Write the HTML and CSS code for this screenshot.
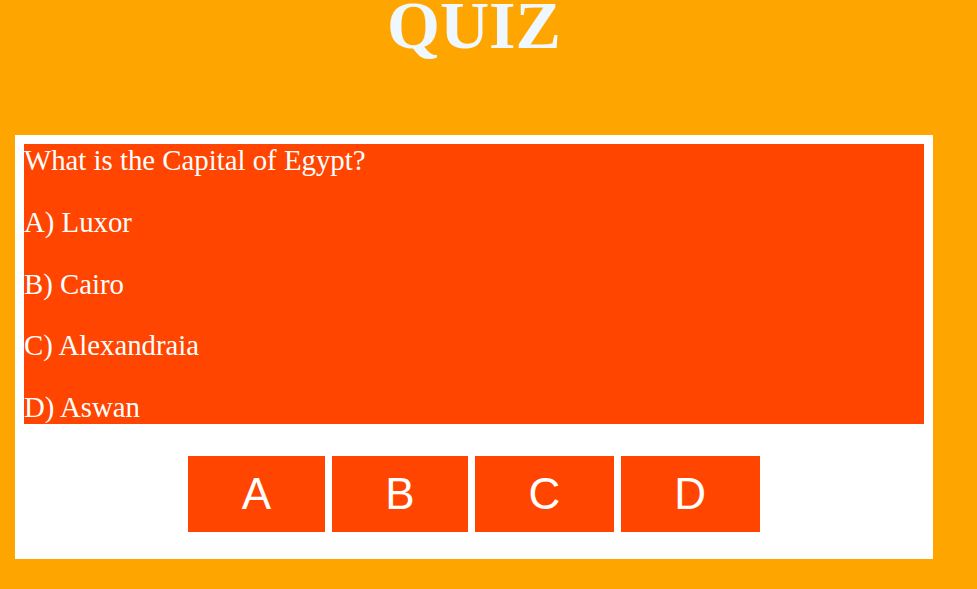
FILE: index.html
```html
<!DOCTYPE html>
<html>
<head>
<meta charset="utf-8">
<title>Quiz</title>
<link rel="stylesheet" href="styles.css">
</head>
<body>
<div class="page">
  <h1 class="title">QUIZ</h1>
  <div class="card">
    <div class="question">
      <p>What is the Capital of Egypt?</p>
      <p>A) Luxor</p>
      <p>B) Cairo</p>
      <p>C) Alexandraia</p>
      <p>D) Aswan</p>
    </div>
    <div class="answers">
      <button class="answer">A</button>
      <button class="answer">B</button>
      <button class="answer">C</button>
      <button class="answer">D</button>
    </div>
  </div>
</div>
</body>
</html>
```
FILE: styles.css
```css
html, body {
  margin: 0;
  padding: 0;
  background: #ffa500;
}
body {
  font-family: "Liberation Serif", "Times New Roman", serif;
}
.page {
  width: 918px;
  margin-left: 15px;
}
.title {
  margin: 0 0 85px;
  font-family: "Liberation Serif", "Times New Roman", serif;
  font-weight: bold;
  font-size: 68px;
  line-height: 50px;
  height: 50px;
  text-align: center;
  color: #f0f8ff;
}
.card {
  background: #ffffff;
  padding: 9px 9px 27px;
}
.question {
  background: #ff4500;
  color: #ffffff;
  font-size: 28.8px;
}
.question p {
  margin: 28.8px 0 0;
}
.question p:first-child {
  margin-top: 0;
}
.answers {
  display: flex;
  justify-content: center;
  gap: 7px;
  margin-top: 32px;
}
.answer {
  background: #ff4500;
  color: #ffffff;
  border: none;
  font-family: "Liberation Sans", Arial, sans-serif;
  font-size: 44px;
  line-height: 50px;
  padding: 13px 53.5px;
  margin: 0;
}
```
